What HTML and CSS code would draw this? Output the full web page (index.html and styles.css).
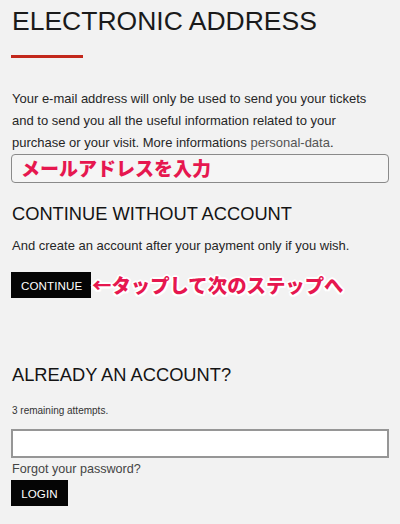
FILE: index.html
```html
<!DOCTYPE html>
<html lang="en">
<head>
<meta charset="utf-8">
<title>Electronic address</title>
<link rel="stylesheet" href="styles.css">
</head>
<body>
<main class="page">
  <h1 class="title">ELECTRONIC ADDRESS</h1>
  <div class="rule"></div>
  <p class="intro">Your e-mail address will only be used to send you your tickets and to send you all the useful information related to your purchase or your visit. More informations <span class="link">personal-data</span>.</p>
  <div class="email-field"><span class="jp-note">メールアドレスを入力</span></div>

  <h2 class="heading heading-guest">CONTINUE WITHOUT ACCOUNT</h2>
  <p class="guest-text">And create an account after your payment only if you wish.</p>
  <div class="continue-row">
    <span class="btn btn-continue">CONTINUE</span><span class="jp-note jp-arrow">←タップして次のステップへ</span>
  </div>

  <h2 class="heading heading-account">ALREADY AN ACCOUNT?</h2>
  <p class="attempts">3 remaining attempts.</p>
  <div class="password-field"></div>
  <p class="forgot">Forgot your password?</p>
  <span class="btn btn-login">LOGIN</span>
</main>
</body>
</html>
```

FILE: styles.css
```css
html, body {
  margin: 0;
  padding: 0;
  background: #f2f2f2;
}

body {
  font-family: "Liberation Sans", Arial, sans-serif;
  color: #222;
}

.page {
  display: flex;
  flex-direction: column;
  align-items: flex-start;
  padding: 5px 11px 0 11px;
}

.title {
  margin: 0;
  padding-left: 1px;
  font-size: 26.5px;
  line-height: 32px;
  font-weight: normal;
  letter-spacing: 0;
  color: #1a1a1a;
}

.rule {
  margin-top: 18px;
  width: 72px;
  height: 3px;
  background: #c3281c;
}

.intro {
  margin: 29.5px 0 0 0;
  padding-left: 1px;
  font-size: 13px;
  line-height: 22px;
  color: #262626;
}

.link {
  color: #555;
}

.email-field {
  box-sizing: border-box;
  width: 378px;
  height: 29px;
  border: 1px solid #8a8a8a;
  border-radius: 4px;
  background: #f5f5f5;
  display: flex;
  align-items: center;
  padding-left: 9px;
}

.jp-note {
  font-family: "Noto Sans CJK JP", "Noto Sans", sans-serif;
  font-weight: 900;
  font-size: 19px;
  line-height: 24px;
  color: #e6174f;
  letter-spacing: 0;
}

.heading {
  margin: 0;
  padding-left: 1px;
  font-size: 18.3px;
  line-height: 24px;
  font-weight: normal;
  color: #141414;
}

.heading-guest {
  margin-top: 19px;
}

.guest-text {
  margin: 9.5px 0 0 0;
  padding-left: 1px;
  font-size: 13px;
  line-height: 22px;
  color: #262626;
}

.continue-row {
  margin-top: 14.5px;
  display: flex;
  align-items: center;
}

.btn {
  display: inline-block;
  height: 26px;
  line-height: 27px;
  padding: 0 10px;
  background: #050505;
  color: #fff;
  font-size: 11.6px;
  letter-spacing: 0.1px;
}

.btn-continue {
  width: 60px;
  text-align: center;
}

.jp-arrow {
  font-size: 19.4px;
  padding-left: 1px;
  text-shadow:
    2px 0 0 #fff, -2px 0 0 #fff, 0 2px 0 #fff, 0 -2px 0 #fff,
    1.5px 1.5px 0 #fff, -1.5px 1.5px 0 #fff, 1.5px -1.5px 0 #fff, -1.5px -1.5px 0 #fff;
}

.heading-account {
  margin-top: 65.5px;
}

.attempts {
  margin: 16.5px 0 0 0;
  padding-left: 1px;
  font-size: 10px;
  line-height: 14px;
  color: #333;
}

.password-field {
  margin-top: 11.5px;
  box-sizing: border-box;
  width: 378px;
  height: 29px;
  border: 2px solid #969696;
  background: #fff;
}

.forgot {
  margin: 2.5px 0 0 0;
  padding-left: 1px;
  font-size: 12.6px;
  line-height: 17px;
  color: #444;
}

.btn-login {
  margin-top: 2.5px;
  width: 37px;
  text-align: center;
}
```
